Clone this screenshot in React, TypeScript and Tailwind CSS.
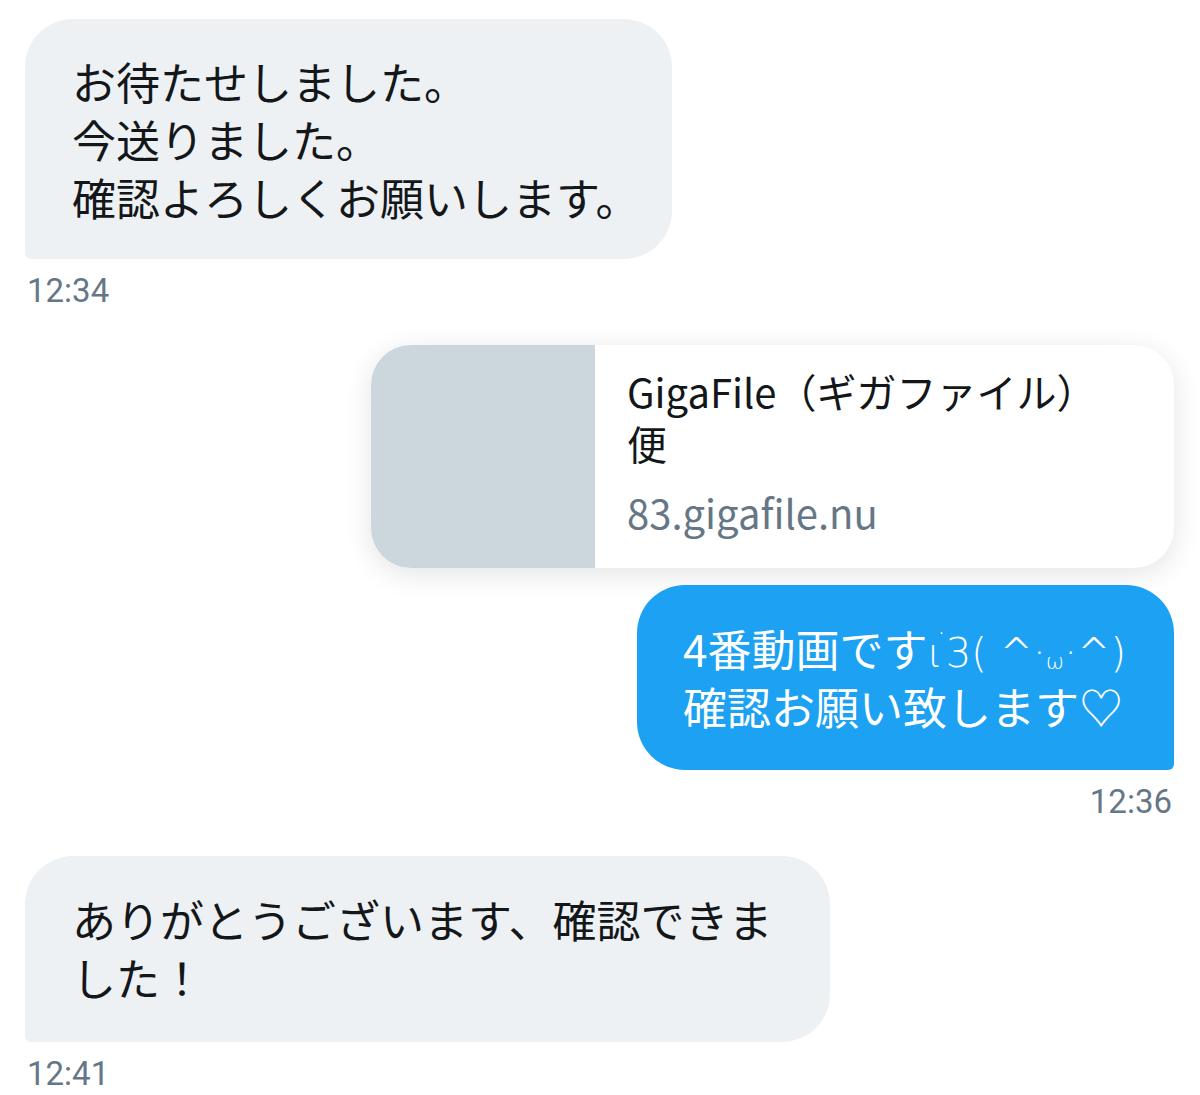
const JP = "font-['Noto_Sans_CJK_JP',sans-serif]";
const TIME = "font-['Roboto','Noto_Sans',sans-serif]";

type Msg =
  | { kind: "in"; lines: string[]; width: string; time?: string }
  | { kind: "link"; title: string; host: string }
  | { kind: "out"; time?: string };

function Timestamp({ time, right }: { time: string; right?: boolean }) {
  return (
    <p
      className={`mt-4 h-8 text-[33px] leading-8 text-[#657786] ${TIME} ${
        right ? "pr-[2px] text-right" : "pl-[2px]"
      }`}
    >
      {time}
    </p>
  );
}

function Incoming({ lines, width, time }: { lines: string[]; width: string; time?: string }) {
  return (
    <div className="flex flex-col items-start">
      <div
        className={`${width} rounded-[48px] rounded-bl-[6px] bg-[#eef1f3] pl-[47px] pr-[20px] text-[44px] leading-[58px] text-[#14171a] ${JP}`}
      >
        {lines.map((l) => (
          <p key={l}>{l}</p>
        ))}
      </div>
      {time && <Timestamp time={time} />}
    </div>
  );
}

function LinkCard({ title, host }: { title: string; host: string }) {
  return (
    <div className="flex justify-end">
      <div className="flex h-[223px] w-[803px] overflow-hidden rounded-[40px] bg-white shadow-[0_6px_28px_rgba(0,0,0,0.11)]">
        <div className="w-[224px] shrink-0 bg-[#ccd6dd]" />
        <div className={`flex-1 pl-8 pr-[40px] pt-5 ${JP}`}>
          <p className="text-[40px] leading-[52px] text-[#14171a]">{title}</p>
          <p className="mt-[17px] text-[40px] leading-[52px] text-[#657786]">{host}</p>
        </div>
      </div>
    </div>
  );
}

function Outgoing({ time }: { time?: string }) {
  return (
    <div className="flex flex-col items-end">
      <div
        className={`w-[537px] rounded-[48px] rounded-br-[6px] bg-[#1da1f2] px-[46px] pb-[35px] pt-[34px] text-[44px] leading-[58px] text-white ${JP}`}
      >
        <p className="h-[58px] whitespace-nowrap">
          4番動画です
          <span className="font-['DejaVu_Sans',sans-serif] text-[40px] font-light leading-none">
            <span className="tracking-[-6px]">ɩ</span>
            <span className="relative -top-[24px] text-[28px]">·</span>3( ^·
            <span className="relative top-[2px] text-[22px]">ω</span>·^)
          </span>
        </p>
        <p>確認お願い致します♡</p>
      </div>
      {time && <Timestamp time={time} right />}
    </div>
  );
}

const THREAD: Msg[] = [
  {
    kind: "in",
    lines: ["お待たせしました。", "今送りました。", "確認よろしくお願いします。"],
    width: "w-[647px] whitespace-nowrap py-[33px]",
    time: "12:34",
  },
  { kind: "link", title: "GigaFile（ギガファイル）便", host: "83.gigafile.nu" },
  { kind: "out", time: "12:36" },
  {
    kind: "in",
    lines: ["ありがとうございます、確認できました！"],
    width: "w-[805px] pt-[34px] pb-[36px]",
    time: "12:41",
  },
];

export default function App() {
  return (
    <div className="min-h-[1095px] w-[1200px] bg-white pl-[25px] pr-[26px] pt-[19px]">
      {THREAD.map((m, i) => {
        const gap = i === 0 ? "" : m.kind === "out" ? "mt-[17px]" : "mt-[38px]";
        return (
          <div key={i} className={gap}>
            {m.kind === "in" && <Incoming lines={m.lines} width={m.width} time={m.time} />}
            {m.kind === "link" && <LinkCard title={m.title} host={m.host} />}
            {m.kind === "out" && <Outgoing time={m.time} />}
          </div>
        );
      })}
    </div>
  );
}
